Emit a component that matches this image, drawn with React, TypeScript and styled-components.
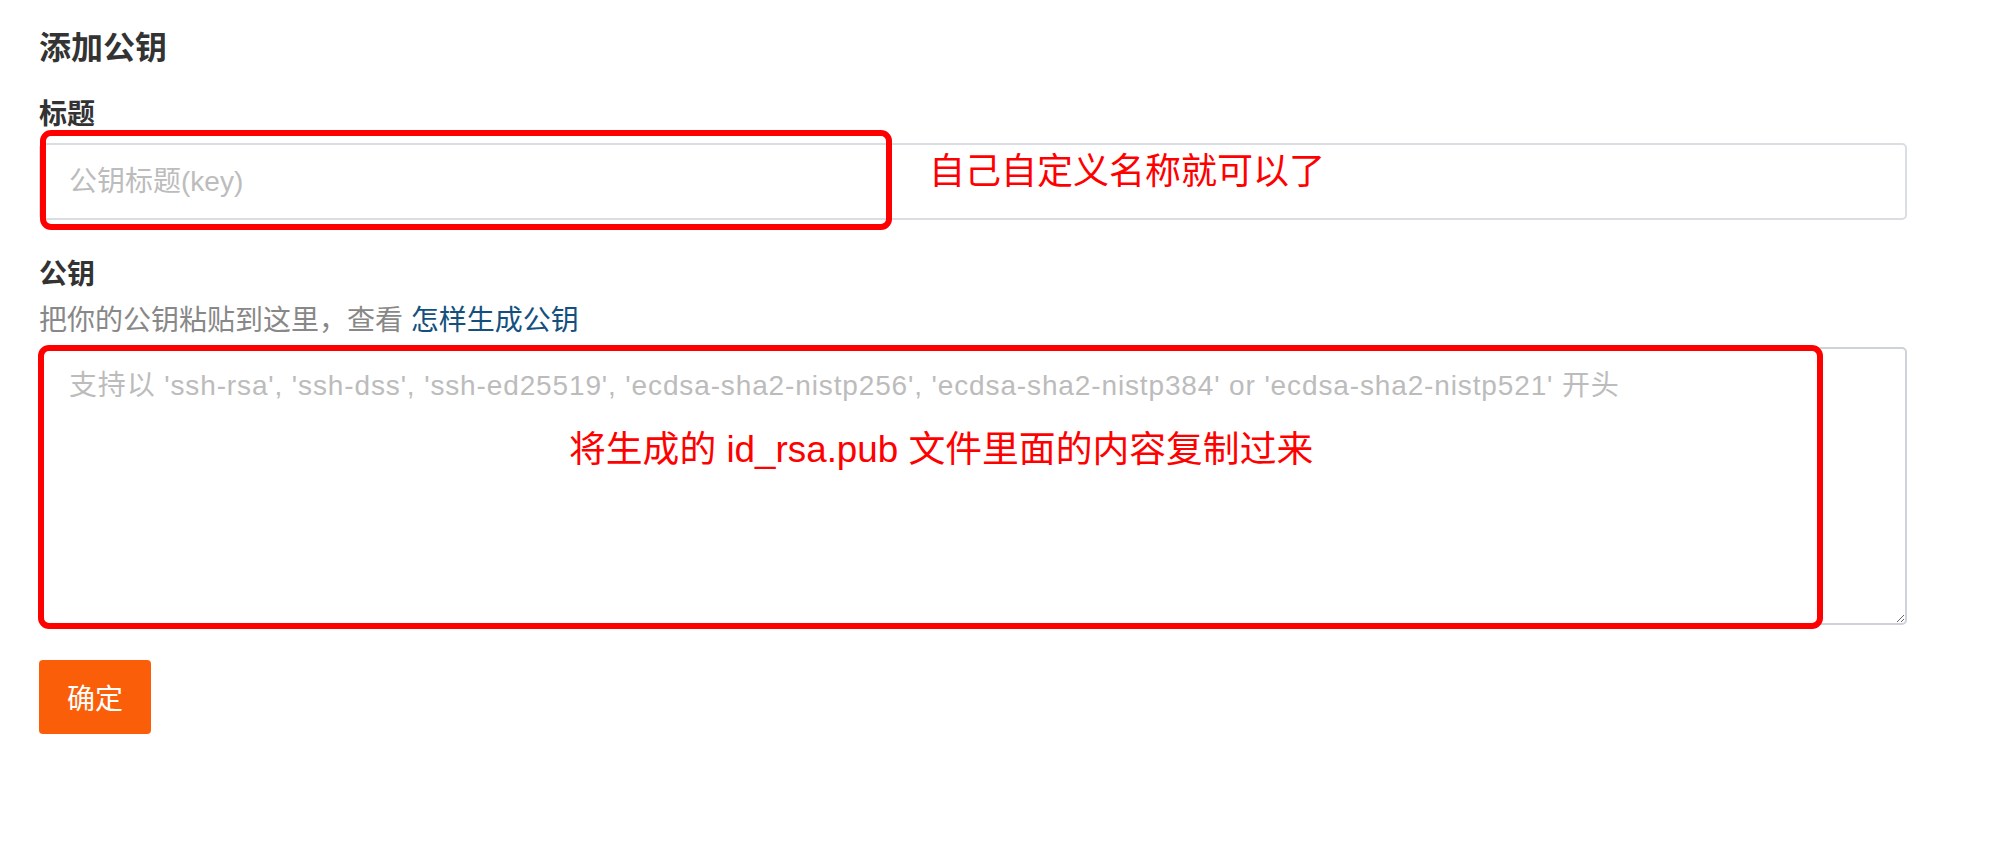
import * as React from 'react'
import styled, { createGlobalStyle } from 'styled-components'

const fontStack = `"Liberation Sans", "Noto Sans CJK SC", sans-serif`

const GlobalStyle = createGlobalStyle`
  html, body {
    margin: 0;
    padding: 0;
    background: #fff;
  }
  body {
    font-family: ${fontStack};
    color: #333;
  }
`

const Page = styled.form`
  display: flex;
  flex-direction: column;
  align-items: flex-start;
  gap: 35px;
  padding: 26px 109px 60px 39px;
`

const Title = styled.h2`
  margin: 0 0 -11px;
  font-size: 32px;
  line-height: 45px;
  font-weight: 600;
  color: #333;
`

const Field = styled.div`
  display: flex;
  flex-direction: column;
  align-self: stretch;
  gap: 6px;
`

const Label = styled.label`
  display: block;
  font-size: 28px;
  line-height: 40px;
  font-weight: 700;
  color: #333;
`

const Hint = styled.div`
  font-size: 28px;
  line-height: 40px;
  color: #888;
`

const HintLink = styled.a`
  color: #14507e;
  text-decoration: none;
`

const Control = styled.div`
  position: relative;
`

const TextInput = styled.input`
  box-sizing: border-box;
  display: block;
  width: 100%;
  height: 77px;
  margin-top: 2px;
  padding: 0 28px;
  border: 2px solid #dadde2;
  border-radius: 5px;
  font-family: ${fontStack};
  font-size: 28px;
  color: #333;
  outline: none;

  &::placeholder {
    color: #bcbcbc;
  }
`

const TextArea = styled.textarea`
  box-sizing: border-box;
  display: block;
  width: 100%;
  height: 278px;
  padding: 17px 28px;
  border: 2px solid #cfd2da;
  border-radius: 5px;
  font-family: ${fontStack};
  font-size: 28px;
  line-height: 40px;
  letter-spacing: 0.87px;
  color: #333;
  resize: vertical;
  outline: none;

  &::placeholder {
    color: #bcbcbc;
  }
`

// red annotation marks drawn over the form
const Mark = styled.div`
  position: absolute;
  box-sizing: border-box;
  border: 6px solid #ff0000;
  border-radius: 11px;
  pointer-events: none;
`

const Note = styled.span<{ wide?: boolean }>`
  position: absolute;
  font-size: ${props => (props.wide ? 36.8 : 36)}px;
  line-height: 36px;
  color: #ff0000;
  white-space: nowrap;
  pointer-events: none;
`

const SubmitButton = styled.button`
  height: 74px;
  padding: 0 28px;
  border: none;
  border-radius: 4px;
  background: #fb5e09;
  color: #fff;
  font-family: ${fontStack};
  font-size: 28px;
  cursor: pointer;
`

export default function App() {
  return (
    <>
      <GlobalStyle />
      <Page onSubmit={e => e.preventDefault()}>
        <Title>添加公钥</Title>
        <Field>
          <Label>标题</Label>
          <Control>
            <TextInput placeholder="公钥标题(key)" />
            <Mark style={{ left: 1, top: -11, width: 852, height: 100 }} />
            <Note style={{ left: 890, top: 13 }}>自己自定义名称就可以了</Note>
          </Control>
        </Field>
        <Field>
          <Label>公钥</Label>
          <Hint>
            把你的公钥粘贴到这里，查看 <HintLink href="#">怎样生成公钥</HintLink>
          </Hint>
          <Control>
            <TextArea placeholder="支持以 'ssh-rsa', 'ssh-dss', 'ssh-ed25519', 'ecdsa-sha2-nistp256', 'ecdsa-sha2-nistp384' or 'ecdsa-sha2-nistp521' 开头" />
            <Mark style={{ left: -1, top: -2, width: 1785, height: 284 }} />
            <Note wide style={{ left: 530, top: 85 }}>将生成的 id_rsa.pub 文件里面的内容复制过来</Note>
          </Control>
        </Field>
        <SubmitButton type="button">确定</SubmitButton>
      </Page>
    </>
  )
}
